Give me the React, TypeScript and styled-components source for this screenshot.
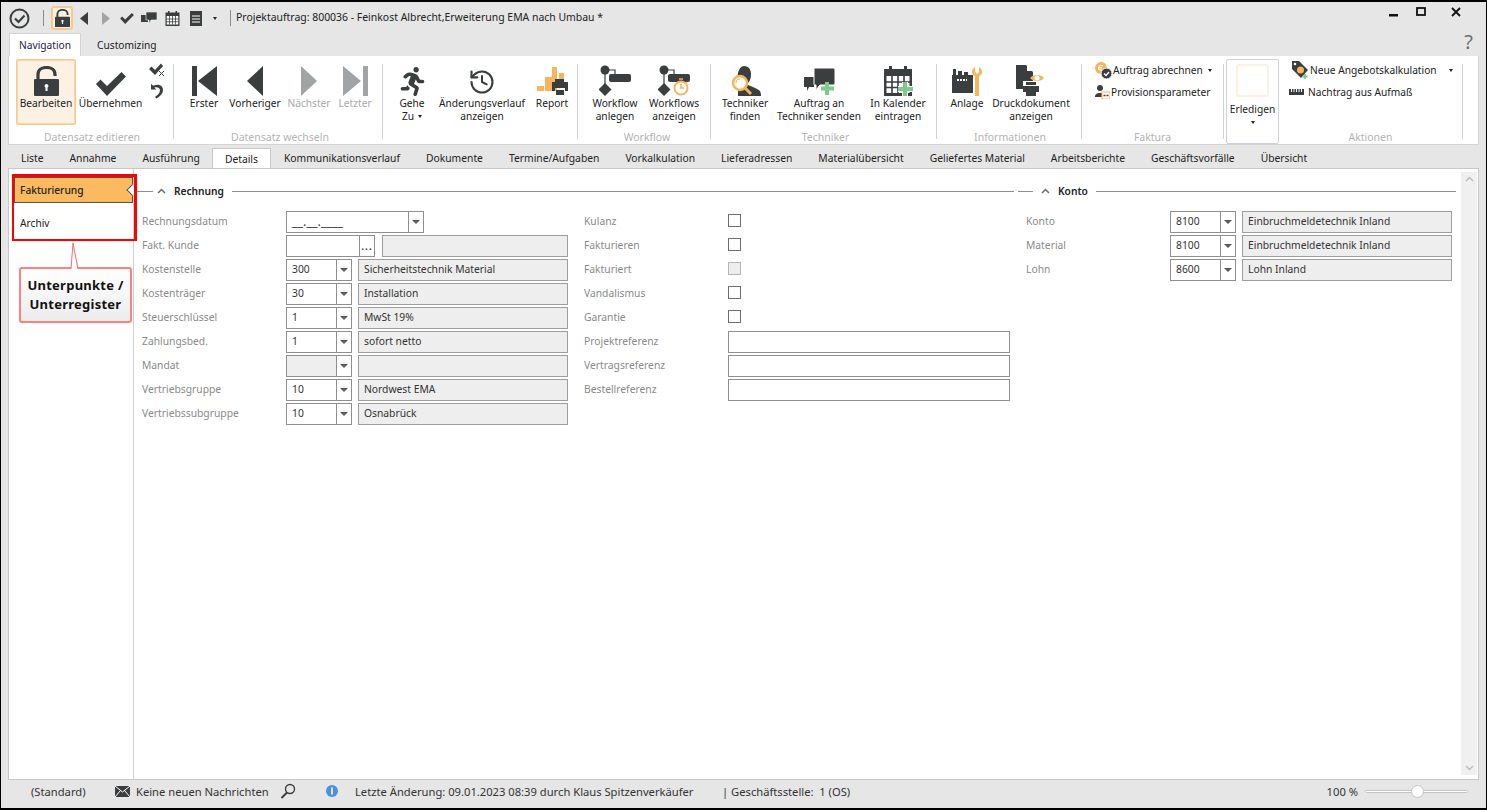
import { ReactNode } from 'react'
import styled, { createGlobalStyle } from 'styled-components'
import { FaRunning } from 'react-icons/fa'
import { History } from 'lucide-react'

const DARK = '#3a3e3e'
const GREY = '#a1a4a4'
const ORANGE = '#f8b45c'
const GREEN = '#7ec98c'

const GlobalStyle = createGlobalStyle`
  * { box-sizing: border-box; }
  html, body { margin: 0; padding: 0; background: #e6e6e6; }
  body { font-family: 'Noto Sans', 'Open Sans', sans-serif; font-size: 10.2px; color: #333; }
`

const Window = styled.div`
  position: relative;
  width: 1487px;
  height: 810px;
  border: 1px solid #000;
  border-top-width: 2px;
  border-bottom-width: 2px;
  background: #e6e6e6;
  display: flex;
  flex-direction: column;
  overflow: hidden;
`

const TitleBar = styled.div`
  height: 31px;
  display: flex;
  align-items: center;
  padding-left: 8px;
  flex: none;
`
const QuickSlot = styled.div<{ $w: number; $active?: boolean }>`
  width: ${(p) => p.$w}px;
  height: ${(p) => (p.$active ? '24px' : 'auto')};
  margin-top: 1px;
  display: flex;
  align-items: center;
  justify-content: center;
  flex: none;
  border: ${(p) => (p.$active ? `2px solid #f9c98c` : 'none')};
  border-radius: 3px;
  background: ${(p) => (p.$active ? '#fdf1e3' : 'transparent')};
`
const TitleSep = styled.div`
  width: 1px;
  height: 16px;
  background: #8c8c8c;
  flex: none;
`
const TitleText = styled.div`
  margin-left: 5px;
  margin-bottom: 2px;
  color: #222;
  white-space: nowrap;
  font-size: 10.45px;
`
const WindowButtons = styled.div`
  margin-left: auto;
  width: 97px;
  display: flex;
  align-items: center;
  gap: 17px;
  padding-bottom: 12px;
  & > :last-child {
    margin-left: 8px;
  }
`

const RibbonTabs = styled.div`
  height: 23px;
  padding: 0 0 0 8px;
  display: flex;
  flex: none;
  align-items: flex-end;
  position: relative;
`
const RibbonTab = styled.div<{ $active?: boolean }>`
  height: 23px;
  padding: 0 ${(p) => (p.$active ? '9px' : '10px')};
  margin-right: ${(p) => (p.$active ? '5px' : '0')};
  line-height: 22px;
  color: ${(p) => (p.$active ? '#1d1d4d' : '#222')};
  background: ${(p) => (p.$active ? '#fff' : 'transparent')};
  border: 1px solid ${(p) => (p.$active ? '#d4d4d4' : 'transparent')};
  border-bottom: none;
`
const HelpMark = styled.div`
  position: absolute;
  right: 13px;
  top: -4px;
  font-size: 20px;
  line-height: 26px;
  color: #6f6f6f;
`

const Ribbon = styled.div`
  height: 89px;
  margin: 0 7px;
  flex: none;
  background: #fff;
  border: 1px solid #d4d4d4;
  border-top: none;
  display: flex;
  align-items: flex-start;
  padding-top: 3px;
`
const Group = styled.div<{ $w: number; $pad?: number; $end?: number }>`
  width: ${(p) => p.$w}px;
  padding-left: ${(p) => p.$pad ?? 0}px;
  padding-right: ${(p) => p.$end ?? 0}px;
  flex: none;
  display: flex;
  flex-direction: column;
`
const GroupBody = styled.div`
  height: 66px;
  display: flex;
`
const GroupLabel = styled.div`
  height: 14px;
  margin-top: 5px;
  line-height: 14px;
  font-size: 10.5px;
  text-align: center;
  color: #b3b3b3;
  white-space: nowrap;
`
const GroupSep = styled.div`
  width: 1px;
  height: 75px;
  margin-top: 5px;
  background: #cdd1da;
  flex: none;
`
const RibbonButton = styled.div<{ $w: number; $active?: boolean; $muted?: boolean }>`
  width: ${(p) => p.$w}px;
  height: 66px;
  flex: none;
  display: flex;
  flex-direction: column;
  align-items: center;
  border: 1px solid ${(p) => (p.$active ? '#f9c98c' : 'transparent')};
  border-radius: 2px;
  background: ${(p) => (p.$active ? '#fdf1e3' : 'transparent')};
  box-shadow: ${(p) => (p.$active ? 'inset 0 0 0 1px #f9d5a8' : 'none')};
  color: ${(p) => (p.$muted ? '#a8a8a8' : '#222')};
`
const IconSlot = styled.div`
  height: 37px;
  padding-bottom: 1px;
  display: flex;
  align-items: flex-end;
  justify-content: center;
  flex: none;
`
const ButtonText = styled.div`
  line-height: 13px;
  text-align: center;
  white-space: nowrap;
`
const Caret = styled.span<{ $gap?: number }>`
  display: inline-block;
  width: 0;
  height: 0;
  margin-left: ${(p) => p.$gap ?? 4}px;
  vertical-align: 2px;
  border-left: 2.5px solid transparent;
  border-right: 2.5px solid transparent;
  border-top: 3px solid #222;
`
const SmallStack = styled.div`
  width: 25px;
  display: flex;
  flex-direction: column;
  align-items: center;
  gap: 6px;
  padding-top: 4px;
`
const SmallColumn = styled.div`
  display: flex;
  flex-direction: column;
  width: 100%;
`
const SmallRow = styled.div<{ $pad: number; $gap?: number }>`
  height: 22px;
  padding-left: ${(p) => p.$pad}px;
  display: flex;
  align-items: center;
  white-space: nowrap;
  color: #222;
  gap: ${(p) => p.$gap ?? 1}px;
`
const DoneBox = styled.div`
  width: 53px;
  height: 85px;
  margin-left: 2px;
  border: 1px solid #cdd1da;
  border-radius: 2px;
  display: flex;
  flex-direction: column;
  align-items: center;
  flex: none;
  color: #222;
`
const DoneSquare = styled.div`
  width: 33px;
  height: 33px;
  margin: 4px 0 6px;
  border: 2px solid #fdf1e3;
  border-radius: 3px;
`

const DocTabs = styled.div`
  height: 20px;
  margin-top: 3px;
  padding-left: 7px;
  flex: none;
  display: flex;
  align-items: flex-end;
  font-size: 10.3px;
`
const DocTab = styled.div<{ $active?: boolean }>`
  height: 20px;
  padding: 0 ${(p) => (p.$active ? '12px' : '13px')};
  margin: ${(p) => (p.$active ? '0 0 0 -1px' : '0')};
  line-height: 20px;
  white-space: nowrap;
  color: #222;
  background: ${(p) => (p.$active ? '#fff' : 'transparent')};
  border: ${(p) => (p.$active ? '1px solid #c8c8c8' : 'none')};
  border-bottom: none;
`

const Content = styled.div`
  flex: 1;
  min-height: 0;
  margin: 0 7px;
  background: #fff;
  border: 1px solid #c8c8c8;
  display: flex;
`
const SideNav = styled.div`
  width: 125px;
  flex: none;
  border-right: 1px solid #d0d0d0;
  padding: 8px 0 0 5px;
  display: flex;
  flex-direction: column;
  gap: 7px;
`
const SideItem = styled.div<{ $active?: boolean }>`
  position: relative;
  height: 26px;
  padding-left: 5px;
  line-height: 25px;
  color: #222;
  font-weight: ${(p) => (p.$active ? 500 : 400)};
  background: ${(p) => (p.$active ? '#fbb960' : 'transparent')};
  border: 1px solid ${(p) => (p.$active ? '#55524a' : 'transparent')};
  ${(p) =>
    p.$active &&
    `&::after {
      content: '';
      position: absolute;
      right: -4px;
      top: 8px;
      width: 7px;
      height: 7px;
      background: #fff;
      border-left: 1px solid #55524a;
      border-bottom: 1px solid #55524a;
      transform: rotate(45deg);
    }`}
`
const Main = styled.div`
  flex: 1;
  display: flex;
  padding-top: 14px;
  font-size: 10.3px;
`
const Section = styled.div<{ $w: number; $gap?: number }>`
  width: ${(p) => p.$w}px;
  margin-left: ${(p) => p.$gap ?? 0}px;
  flex: none;
`
const SectionHead = styled.div`
  height: 16px;
  display: flex;
  align-items: center;
  font-weight: 600;
  color: #222;
  font-size: 10.2px;
`
const HeadLine = styled.div<{ $w?: number }>`
  height: 1px;
  background: #8f8f8f;
  flex: ${(p) => (p.$w ? `0 0 ${p.$w}px` : '1')};
`
const HeadGap = styled.div<{ $w: number }>`
  flex: 0 0 ${(p) => p.$w}px;
`
const HeadTitle = styled.div`
  margin: 0 8px 0 8px;
  white-space: nowrap;
`
const Columns = styled.div<{ $pad: number }>`
  display: flex;
  gap: 16px;
  padding: 12px 0 0 ${(p) => p.$pad}px;
`
const FieldColumn = styled.div`
  width: 426px;
  flex: none;
`
const FieldRow = styled.div`
  height: 24px;
  display: grid;
  grid-template-columns: 144px 1fr;
  align-items: start;
`
const FieldLabel = styled.div`
  line-height: 21px;
  color: #8a8a8a;
  white-space: nowrap;
`
const FieldGroup = styled.div<{ $gap?: number }>`
  display: flex;
  gap: ${(p) => p.$gap ?? 6}px;
`
const Combo = styled.div<{ $w: number; $off?: boolean }>`
  width: ${(p) => p.$w}px;
  height: 22px;
  flex: none;
  border: 1px solid #8f8f8f;
  display: flex;
  background: ${(p) => (p.$off ? '#eee' : '#fff')};
`
const ComboValue = styled.div<{ $mask?: boolean }>`
  flex: 1;
  padding-left: 5px;
  line-height: 19px;
  color: #333;
  white-space: nowrap;
  font-size: ${(p) => (p.$mask ? '12.5px' : 'inherit')};
`
const ComboArrow = styled.div`
  width: 15px;
  border-left: 1px solid #8f8f8f;
  background: #fff;
  flex: none;
  display: flex;
  align-items: center;
  justify-content: center;
  &::before {
    content: '';
    border-left: 4px solid transparent;
    border-right: 4px solid transparent;
    border-top: 4px solid #5a5a5a;
  }
`
const DotsButton = styled.div`
  width: 15px;
  border-left: 1px solid #8f8f8f;
  flex: none;
  text-align: center;
  line-height: 21px;
  color: #444;
  font-weight: 600;
  letter-spacing: 1px;
`
const ReadOnly = styled.div<{ $w?: number }>`
  width: ${(p) => p.$w ?? 210}px;
  height: 22px;
  flex: none;
  border: 1px solid #9e9e9e;
  background: #eee;
  padding-left: 5px;
  line-height: 19px;
  color: #333;
  white-space: nowrap;
`
const TextInput = styled.div`
  width: 282px;
  height: 22px;
  border: 1px solid #8f8f8f;
  background: #fff;
`
const CheckBox = styled.div<{ $off?: boolean }>`
  width: 13px;
  height: 13px;
  margin-top: 3px;
  border: 1px solid ${(p) => (p.$off ? '#b5b5b5' : '#6e6e6e')};
  background: ${(p) => (p.$off ? '#eee' : '#fff')};
`
const ScrollBar = styled.div`
  width: 16px;
  margin: 3px 1px 4px 0;
  flex: none;
  background: #f0f0f0;
  display: flex;
  flex-direction: column;
  justify-content: space-between;
  align-items: center;
  padding: 4px 0;
`

const StatusBar = styled.div`
  height: 28px;
  padding: 0 0 6px 30px;
  flex: none;
  display: flex;
  align-items: center;
  white-space: nowrap;
  color: #333;
  font-size: 11.2px;
`
const StatusCell = styled.div<{ $w: number }>`
  width: ${(p) => p.$w}px;
  flex: none;
  display: flex;
  align-items: center;
  gap: 6px;
`
const ZoomText = styled.div`
  margin-left: auto;
  margin-right: 7px;
`
const ZoomTrack = styled.div`
  position: relative;
  width: 103px;
  height: 3px;
  margin-right: 18px;
  background: #fff;
  border: 1px solid #c4c4c4;
  border-radius: 2px;
`
const ZoomThumb = styled.div`
  position: absolute;
  left: 45px;
  top: -6px;
  width: 13px;
  height: 13px;
  border-radius: 50%;
  background: #fff;
  border: 1px solid #c4c4c4;
`

const RedFrame = styled.div`
  position: absolute;
  left: 11px;
  top: 172px;
  width: 125px;
  height: 67px;
  border: 2px solid #f00;
  border-top-width: 3px;
  border-right-width: 3px;
  pointer-events: none;
`
const Callout = styled.div`
  position: absolute;
  left: 18px;
  top: 265px;
  width: 113px;
  height: 56px;
  border: 2px solid #ff8080;
  border-radius: 3px;
  background: linear-gradient(#fff, #ececec);
  display: flex;
  align-items: center;
  justify-content: center;
  text-align: center;
  font-weight: 700;
  font-size: 13px;
  line-height: 19px;
  letter-spacing: 0.25px;
  color: #111;
`
const CalloutTip = styled.svg`
  position: absolute;
  left: 62px;
  top: 240px;
`

const Svg = ({ w, h = w, children }: { w: number; h?: number; children?: ReactNode }) => (
  <svg width={w} height={h} viewBox={`0 0 ${w} ${h}`} fill="none" style={{ display: 'block' }}>
    {children}
  </svg>
)

const LockIcon = ({ s = 1 }: { s?: number }) => (
  <svg width={25 * s} height={30 * s} viewBox="0 0 25 30" style={{ display: 'block' }}>
    <path d="M4 14V8.500C4 4 7.500 1.500 12.500 1.500S21 4 21 8.500V10" fill="none" stroke={DARK} strokeWidth="3.200" />
    <rect x="0" y="13" width="25" height="17" rx="1" fill={DARK} />
    <path d="M12.500 18a2 2 0 0 1 1 3.700V25h-2v-3.300a2 2 0 0 1 1-3.700z" fill="#fff" />
  </svg>
)
const CheckIcon = ({ w = 30, h = 24 }: { w?: number; h?: number }) => (
  <svg width={w} height={h} viewBox="0 0 30 24" style={{ display: 'block' }}>
    <path d="M0 12l4.500-4.500L11 14 25.500 0 30 4.500 11 24z" fill={DARK} />
  </svg>
)
const SmallCheckX = () => (
  <Svg w={16} h={14}>
    <path d="M0 6l2.500-2.500L6 7l6-6.500L14 3 6 12z" fill={DARK} />
    <path d="M10 8l5 5M15 8l-5 5" stroke={DARK} strokeWidth="1" />
  </Svg>
)
const UndoIcon = () => (
  <Svg w={14} h={16}>
    <path d="M1 1v5.500h5.500L4.400 4.600C7 3.600 10 4.600 10 7.400c0 2.400-2.500 4.600-5 6.600l1.600 1.600C10 13 13 10.600 13 7c0-4.600-5.200-6.300-9.600-4.300z" fill={DARK} />
  </Svg>
)
const Tri = ({ dir, color, w = 16, h = 30 }: { dir: 'l' | 'r'; color: string; w?: number; h?: number }) => (
  <Svg w={w} h={h}>
    <path d={dir === 'l' ? `M${w} 0V${h}L0 ${h / 2}z` : `M0 0V${h}L${w} ${h / 2}z`} fill={color} />
  </Svg>
)
const FirstIcon = () => (
  <Svg w={25} h={30}>
    <rect width="5" height="30" fill={DARK} />
    <path d="M25 0v30L6 15z" fill={DARK} />
  </Svg>
)
const LastIcon = () => (
  <Svg w={25} h={30}>
    <path d="M0 0v30l18-15z" fill={GREY} />
    <rect x="20" width="5" height="30" fill={GREY} />
  </Svg>
)
const ReportIcon = () => (
  <Svg w={31} h={30}>
    <rect x="0" y="20" width="7" height="5" fill={ORANGE} />
    <rect x="8" y="11" width="7" height="14" fill={ORANGE} />
    <rect x="15" y="1" width="5" height="24" fill={ORANGE} />
    <rect x="22" y="7" width="5" height="6" fill={ORANGE} />
    <path d="M18 13h9v3h-9zM15 16h16v9h-3v-3H18v3h-3zM19 24h8v5h-8z" fill={DARK} />
  </Svg>
)
const FlowBase = () => (
  <>
    <circle cx="6" cy="5" r="4.500" fill={DARK} />
    <rect x="10" y="9" width="22" height="8" rx="2" fill={DARK} />
    <path d="M6 8v14M6 5h10v5" stroke={DARK} strokeWidth="1.200" />
    <path d="M6 18l6.500 6.500L6 31l-6.500-6.500z" fill={DARK} />
  </>
)
const WorkflowIcon = () => (
  <Svg w={32} h={31}>
    <FlowBase />
  </Svg>
)
const WorkflowsIcon = () => (
  <Svg w={32} h={31}>
    <FlowBase />
    <circle cx="23" cy="23" r="6.500" fill="#fff" stroke={ORANGE} strokeWidth="2" />
    <path d="M23 19v4h3M21 14h4M29 17l-2 2" stroke={ORANGE} strokeWidth="1.600" />
  </Svg>
)
const TechFindIcon = () => (
  <Svg w={31} h={30}>
    <path d="M14 0c5 0 7 4 7 8s-1 7-3 9v2c5 2 10 4 12 6 1 2 1 4 1 5H8c0-5 0-9 3-11v-2C8 15 7 11 8 7c1-4 3-7 6-7z" fill={DARK} />
    <circle cx="10" cy="17" r="7" fill="#fff" stroke={ORANGE} strokeWidth="2.500" />
    <path d="M15 22l6 6" stroke={ORANGE} strokeWidth="3" />
    <path d="M6 17a4 4 0 0 1 4-4" stroke={ORANGE} strokeWidth="1.200" />
  </Svg>
)
const SendTechIcon = () => (
  <Svg w={31} h={28}>
    <path d="M0 9h10v10H5l-2 4v-4H0z" fill={DARK} />
    <path d="M10 1c0-1 1-1 1-1h18c1 0 2 1 2 2v13c0 1-1 2-2 2H16l-4 5v-5h-1c-1 0-1-1-1-1z" fill={DARK} stroke="#fff" strokeWidth="1" />
    <path d="M23 14v13M17 20.500h13" stroke={GREEN} strokeWidth="4" />
  </Svg>
)
const CalendarIcon = ({ s = 30 }: { s?: number }) => (
  <svg width={s} height={s} viewBox="0 0 30 30" style={{ display: 'block' }}>
    <path d="M1 3h5V0h3v3h12V0h3v3h5v27H1z" fill={DARK} />
    <rect x="3.500" y="10" width="23" height="17" fill="#fff" />
    <path d="M3 16h24M3 21.500h24M9 10v17M15 10v17M21 10v17" stroke={DARK} strokeWidth="1.600" />
  </svg>
)
const CalendarPlusIcon = () => (
  <Svg w={31} h={30}>
    <CalendarIcon s={30} />
    <path d="M22 16v14M15 23h15" stroke="#fff" strokeWidth="6" />
    <path d="M22 16v14M15 23h15" stroke={GREEN} strokeWidth="4" />
  </Svg>
)
const PlantIcon = () => (
  <Svg w={31} h={30}>
    <rect x="1" y="3" width="3" height="6" fill={DARK} />
    <rect x="6" y="5" width="4" height="4" fill={DARK} />
    <rect x="12" y="6" width="4" height="3" fill={DARK} />
    <path d="M0 9h21v18H0z" fill={DARK} />
    <path d="M5 14h10" stroke="#fff" strokeWidth="2" strokeDasharray="2 1" />
    <path d="M27 1v5l-2 2-2-2V1c-2 1-3 3-3 5s1 3 3 4v20h4V10c2-1 3-2 3-4s-1-4-3-5z" fill={ORANGE} />
  </Svg>
)
const PrintDocIcon = () => (
  <Svg w={31} h={31}>
    <path d="M0 0h10l7 7v10H9v7H0z" fill={DARK} />
    <path d="M11 0l6 6h-6z" fill="#fff" />
    <rect x="7" y="16" width="15" height="14" fill="#fff" />
    <path d="M10 17h10v3H10zM7 21h16v6H7zM10 26h10v5H10z" fill={DARK} />
    <path d="M14 13c3-4 11-4 14 0-3 4-11 4-14 0z" fill={ORANGE} />
    <circle cx="21" cy="13" r="2.500" fill="#fff" />
  </Svg>
)
const BillIcon = () => (
  <Svg w={17} h={17}>
    <circle cx="6" cy="6" r="6" fill={ORANGE} />
    <path d="M8 3.500H6a2 2 0 0 0 0 5h2M3 5.500h4M3 7h4" stroke="#fff" strokeWidth="0.900" />
    <circle cx="11.500" cy="11.500" r="5.500" fill={DARK} stroke="#fff" />
    <path d="M9 11.500l2 2 3-3.500" stroke="#fff" strokeWidth="1.300" />
  </Svg>
)
const ProvisionIcon = () => (
  <Svg w={15} h={14}>
    <circle cx="5" cy="3" r="3" fill={DARK} />
    <path d="M0 12c0-3 2-4 5-4s4 1 4 4z" fill={DARK} />
    <rect x="7" y="7" width="8" height="7" fill="#fff" stroke={ORANGE} />
    <path d="M8.500 10.500h5" stroke={DARK} strokeWidth="1.500" strokeDasharray="2 1" />
  </Svg>
)
const TagIcon = () => (
  <Svg w={17} h={18}>
    <path d="M0 0h7l9 9-7 8-9-9z" fill={DARK} />
    <circle cx="3" cy="3" r="1.300" fill="#fff" />
    <circle cx="8.500" cy="9" r="3.500" fill={ORANGE} />
    <path d="M13 13v5M10.500 15.500h5" stroke={GREEN} strokeWidth="1.800" />
  </Svg>
)
const RulerIcon = () => (
  <Svg w={15} h={6}>
    <rect width="15" height="6" fill={DARK} />
    <path d="M2.500 0v3M5 0v3M7.500 0v3M10 0v3M12.500 0v3" stroke="#fff" />
  </Svg>
)
const CommentsIcon = () => (
  <Svg w={16} h={12}>
    <rect x="0" y="3" width="7" height="7" fill={DARK} />
    <path d="M5 0h11v8h-6l-2 4V8H5z" fill={DARK} stroke="#fff" strokeWidth="0.600" />
  </Svg>
)
const ListIcon = () => (
  <Svg w={12} h={15}>
    <rect width="12" height="15" fill={DARK} />
    <path d="M2 5h8M2 8h8M2 11h8" stroke="#fff" />
  </Svg>
)
const RoundCheck = () => (
  <Svg w={21} h={21}>
    <circle cx="10.500" cy="10.500" r="9" stroke={DARK} strokeWidth="2" />
    <path d="M6 10.500l3.500 3.500 6-6.500" stroke={DARK} strokeWidth="2.200" />
  </Svg>
)
const Chevron = ({ up = true, color = '#6a6a6a' }: { up?: boolean; color?: string }) => (
  <Svg w={9} h={6}>
    <path d={up ? 'M1 5l3.500-3.500L8 5' : 'M1 1l3.500 3.500L8 1'} stroke={color} strokeWidth="1.500" />
  </Svg>
)
const MailIcon = () => (
  <Svg w={15} h={11}>
    <rect width="15" height="11" fill={DARK} />
    <path d="M0 0l7.500 6L15 0M0 11l5.500-6.500M15 11L9.500 4.500" stroke="#fff" />
  </Svg>
)
const SearchIcon = () => (
  <Svg w={16} h={16}>
    <circle cx="10" cy="6" r="4.500" stroke={DARK} strokeWidth="1.400" />
    <path d="M7 9.500L1.500 15" stroke={DARK} strokeWidth="2" />
  </Svg>
)
const InfoIcon = () => (
  <Svg w={12} h={12}>
    <circle cx="6" cy="6" r="6" fill="#4a90e2" />
    <path d="M6 2.500v7" stroke="#fff" strokeWidth="1.600" />
  </Svg>
)
const WinMin = () => <Svg w={10} h={10}><rect y="7" width="9" height="2.500" fill="#111" /></Svg>
const WinMax = () => <Svg w={10} h={10}><rect x="1" y="1" width="8" height="7" stroke="#111" strokeWidth="1.800" /></Svg>
const WinClose = () => <Svg w={10} h={10}><path d="M1 1l8 8M9 1l-8 8" stroke="#111" strokeWidth="1.800" /></Svg>

type BtnProps = { w: number; icon: ReactNode; lines: ReactNode[]; active?: boolean; muted?: boolean }
const Btn = ({ w, icon, lines, active, muted }: BtnProps) => (
  <RibbonButton $w={w} $active={active} $muted={muted}>
    <IconSlot>{icon}</IconSlot>
    {lines.map((l, i) => (
      <ButtonText key={i}>{l}</ButtonText>
    ))}
  </RibbonButton>
)

const docTabs = ['Liste', 'Annahme', 'Ausführung', 'Details', 'Kommunikationsverlauf', 'Dokumente', 'Termine/Aufgaben', 'Vorkalkulation', 'Lieferadressen', 'Materialübersicht', 'Geliefertes Material', 'Arbeitsberichte', 'Geschäftsvorfälle', 'Übersicht']

const comboRows = [
  ['Kostenstelle', '300', 'Sicherheitstechnik Material'],
  ['Kostenträger', '30', 'Installation'],
  ['Steuerschlüssel', '1', 'MwSt 19%'],
  ['Zahlungsbed.', '1', 'sofort netto'],
  ['Mandat', '', ''],
  ['Vertriebsgruppe', '10', 'Nordwest EMA'],
  ['Vertriebssubgruppe', '10', 'Osnabrück'],
]
const kontoRows = [
  ['Konto', '8100', 'Einbruchmeldetechnik Inland'],
  ['Material', '8100', 'Einbruchmeldetechnik Inland'],
  ['Lohn', '8600', 'Lohn Inland'],
]
const checkRows: [string, boolean][] = [['Kulanz', false], ['Fakturieren', false], ['Fakturiert', true], ['Vandalismus', false], ['Garantie', false]]

const ComboRow = ({ label, value, text }: { label: string; value: string; text: string }) => (
  <FieldRow>
    <FieldLabel>{label}</FieldLabel>
    <FieldGroup>
      <Combo $w={66} $off={label === 'Mandat'}>
        <ComboValue>{value}</ComboValue>
        <ComboArrow />
      </Combo>
      <ReadOnly>{text}</ReadOnly>
    </FieldGroup>
  </FieldRow>
)

export default function App() {
  return (
    <Window>
      <GlobalStyle />
      <TitleBar>
        <QuickSlot $w={21}><RoundCheck /></QuickSlot>
        <QuickSlot $w={13} />
        <TitleSep />
        <QuickSlot $w={7} />
        <QuickSlot $w={22} $active><LockIcon s={0.6} /></QuickSlot>
        <QuickSlot $w={22}><Tri dir="l" color={DARK} w={8} h={13} /></QuickSlot>
        <QuickSlot $w={22}><Tri dir="r" color={GREY} w={8} h={13} /></QuickSlot>
        <QuickSlot $w={20}><CheckIcon w={14} h={11} /></QuickSlot>
        <QuickSlot $w={24}><CommentsIcon /></QuickSlot>
        <QuickSlot $w={22}><CalendarIcon s={15} /></QuickSlot>
        <QuickSlot $w={26}><ListIcon /></QuickSlot>
        <QuickSlot $w={12}><Caret $gap={0} /></QuickSlot>
        <QuickSlot $w={9} />
        <TitleSep />
        <TitleText>Projektauftrag: 800036 - Feinkost Albrecht,Erweiterung EMA nach Umbau *</TitleText>
        <WindowButtons>
          <WinMin />
          <WinMax />
          <WinClose />
        </WindowButtons>
      </TitleBar>

      <RibbonTabs>
        <RibbonTab $active>Navigation</RibbonTab>
        <RibbonTab>Customizing</RibbonTab>
        <HelpMark>?</HelpMark>
      </RibbonTabs>

      <Ribbon>
        <Group $w={164} $pad={7} $end={5}>
          <GroupBody>
            <Btn w={60} active icon={<LockIcon />} lines={['Bearbeiten']} />
            <Btn w={69} icon={<CheckIcon />} lines={['Übernehmen']} />
            <SmallStack><SmallCheckX /><UndoIcon /></SmallStack>
          </GroupBody>
          <GroupLabel>Datensatz editieren</GroupLabel>
        </Group>
        <GroupSep />
        <Group $w={208} $pad={9} $end={5}>
          <GroupBody>
            <Btn w={42} icon={<FirstIcon />} lines={['Erster']} />
            <Btn w={60} icon={<Tri dir="l" color={DARK} />} lines={['Vorheriger']} />
            <Btn w={48} muted icon={<Tri dir="r" color={GREY} />} lines={['Nächster']} />
            <Btn w={44} muted icon={<LastIcon />} lines={['Letzter']} />
          </GroupBody>
          <GroupLabel>Datensatz wechseln</GroupLabel>
        </Group>
        <GroupSep />
        <Group $w={194} $pad={9}>
          <GroupBody>
            <Btn w={40} icon={<FaRunning size={29} color={DARK} style={{ display: 'block' }} />} lines={['Gehe', <>Zu<Caret /></>]} />
            <Btn w={100} icon={<History size={28} color={DARK} strokeWidth={1.8} style={{ display: 'block' }} />} lines={['Änderungsverlauf', 'anzeigen']} />
            <Btn w={40} icon={<ReportIcon />} lines={['Report']} />
          </GroupBody>
          <GroupLabel />
        </Group>
        <GroupSep />
        <Group $w={132} $pad={9} $end={3}>
          <GroupBody>
            <Btn w={56} icon={<WorkflowIcon />} lines={['Workflow', 'anlegen']} />
            <Btn w={62} icon={<WorkflowsIcon />} lines={['Workflows', 'anzeigen']} />
          </GroupBody>
          <GroupLabel>Workflow</GroupLabel>
        </Group>
        <GroupSep />
        <Group $w={225} $pad={4}>
          <GroupBody>
            <Btn w={60} icon={<TechFindIcon />} lines={['Techniker', 'finden']} />
            <Btn w={88} icon={<SendTechIcon />} lines={['Auftrag an', 'Techniker senden']} />
            <Btn w={70} icon={<CalendarPlusIcon />} lines={['In Kalender', 'eintragen']} />
          </GroupBody>
          <GroupLabel>Techniker</GroupLabel>
        </Group>
        <GroupSep />
        <Group $w={144} $pad={10} $end={8}>
          <GroupBody>
            <Btn w={40} icon={<PlantIcon />} lines={['Anlage']} />
            <Btn w={88} icon={<PrintDocIcon />} lines={['Druckdokument', 'anzeigen']} />
          </GroupBody>
          <GroupLabel>Informationen</GroupLabel>
        </Group>
        <GroupSep />
        <Group $w={141}>
          <GroupBody>
            <SmallColumn>
              <SmallRow $pad={13}><BillIcon />Auftrag abrechnen<Caret /></SmallRow>
              <SmallRow $pad={13}><ProvisionIcon />Provisionsparameter</SmallRow>
            </SmallColumn>
          </GroupBody>
          <GroupLabel>Faktura</GroupLabel>
        </Group>
        <GroupSep />
        <DoneBox>
          <DoneSquare />
          <ButtonText>Erledigen</ButtonText>
          <ButtonText><Caret $gap={0} /></ButtonText>
        </DoneBox>
        <Group $w={183}>
          <GroupBody>
            <SmallColumn>
              <SmallRow $pad={13}><TagIcon />Neue Angebotskalkulation<Caret $gap={11} /></SmallRow>
              <SmallRow $pad={10} $gap={4}><RulerIcon />Nachtrag aus Aufmaß</SmallRow>
            </SmallColumn>
          </GroupBody>
          <GroupLabel>Aktionen</GroupLabel>
        </Group>
        <GroupSep />
      </Ribbon>

      <DocTabs>
        {docTabs.map((t) => (
          <DocTab key={t} $active={t === 'Details'}>{t}</DocTab>
        ))}
      </DocTabs>

      <Content>
        <SideNav>
          <SideItem $active>Fakturierung</SideItem>
          <SideItem>Archiv</SideItem>
        </SideNav>
        <Main>
          <Section $w={880}>
            <SectionHead>
              <HeadLine $w={19} />
              <HeadGap $w={4} />
              <Chevron />
              <HeadTitle>Rechnung</HeadTitle>
              <HeadLine />
            </SectionHead>
            <Columns $pad={8}>
              <FieldColumn>
                <FieldRow>
                  <FieldLabel>Rechnungsdatum</FieldLabel>
                  <Combo $w={138}>
                    <ComboValue $mask>__.__.____</ComboValue>
                    <ComboArrow />
                  </Combo>
                </FieldRow>
                <FieldRow>
                  <FieldLabel>Fakt. Kunde</FieldLabel>
                  <FieldGroup $gap={7}>
                    <Combo $w={89}>
                      <ComboValue />
                      <DotsButton>...</DotsButton>
                    </Combo>
                    <ReadOnly $w={186} />
                  </FieldGroup>
                </FieldRow>
                {comboRows.map(([label, value, text]) => (
                  <ComboRow key={label} label={label} value={value} text={text} />
                ))}
              </FieldColumn>
              <FieldColumn>
                {checkRows.map(([label, off]) => (
                  <FieldRow key={label}>
                    <FieldLabel>{label}</FieldLabel>
                    <CheckBox $off={off} />
                  </FieldRow>
                ))}
                {['Projektreferenz', 'Vertragsreferenz', 'Bestellreferenz'].map((label) => (
                  <FieldRow key={label}>
                    <FieldLabel>{label}</FieldLabel>
                    <TextInput />
                  </FieldRow>
                ))}
              </FieldColumn>
            </Columns>
          </Section>
          <Section $w={438} $gap={4}>
            <SectionHead>
              <HeadLine $w={15} />
              <HeadGap $w={8} />
              <Chevron />
              <HeadTitle>Konto</HeadTitle>
              <HeadLine />
            </SectionHead>
            <Columns $pad={8}>
              <FieldColumn>
                {kontoRows.map(([label, value, text]) => (
                  <ComboRow key={label} label={label} value={value} text={text} />
                ))}
              </FieldColumn>
            </Columns>
          </Section>
        </Main>
        <ScrollBar>
          <Chevron color="#bdbdbd" />
          <Chevron up={false} color="#bdbdbd" />
        </ScrollBar>
      </Content>

      <StatusBar>
        <StatusCell $w={84}>(Standard)</StatusCell>
        <StatusCell $w={165}><MailIcon />Keine neuen Nachrichten</StatusCell>
        <StatusCell $w={46}><SearchIcon /></StatusCell>
        <StatusCell $w={29}><InfoIcon /></StatusCell>
        <StatusCell $w={367}>Letzte Änderung: 09.01.2023 08:39 durch Klaus Spitzenverkäufer</StatusCell>
        <StatusCell $w={130}>| Geschäftsstelle:&nbsp; 1 (OS)</StatusCell>
        <ZoomText>100 %</ZoomText>
        <ZoomTrack><ZoomThumb /></ZoomTrack>
      </StatusBar>

      <RedFrame />
      <Callout>Unterpunkte /<br />Unterregister</Callout>
      <CalloutTip width="20" height="28" viewBox="0 0 20 28">
        <path d="M8 27L10 1l5 26" fill="#fff" stroke="#ff6a6a" strokeWidth="1" />
      </CalloutTip>
    </Window>
  )
}
